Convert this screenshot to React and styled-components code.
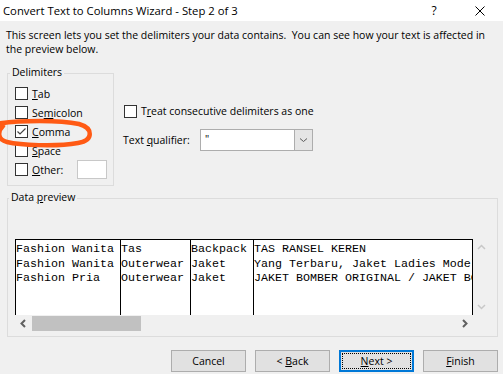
import React from "react";
import styled, { createGlobalStyle } from "styled-components";

const GlobalStyle = createGlobalStyle`
  html, body {
    margin: 0;
    padding: 0;
    background: #f0f0f0;
  }
  body {
    font-family: "Open Sans", "Liberation Sans", sans-serif;
  }
`;

const Window = styled.div`
  position: relative;
  width: 503px;
  height: 374px;
  overflow: hidden;
  background: #f0f0f0;
  color: #000;
  font-size: 10.5px;
`;

const TitleBar = styled.div`
  display: flex;
  align-items: center;
  height: 21px;
  background: #fff;
`;

const Title = styled.div`
  flex: 1;
  padding-left: 3px;
  font-size: 11.3px;
  line-height: 21px;
  white-space: nowrap;
`;

const CaptionButton = styled.div`
  width: 46px;
  height: 21px;
  display: flex;
  align-items: center;
  justify-content: center;
  font-size: 12px;
`;

const Content = styled.div`
  display: flex;
  flex-direction: column;
  padding: 0 5px 0 7px;
`;

const Intro = styled.p`
  margin: 7px 0 0 -1px;
  line-height: 14px;
  white-space: pre;
`;

const OptionsRow = styled.div`
  display: flex;
  margin-top: 17px;
`;

const GroupBox = styled.div`
  position: relative;
  box-sizing: border-box;
  width: ${(p) => p.$width}px;
  height: ${(p) => p.$height}px;
  border: 1px solid #dcdcdc;
`;

const Legend = styled.span`
  position: absolute;
  top: -9px;
  left: ${(p) => p.$left}px;
  padding: 0 2px;
  line-height: 14px;
  background: #f0f0f0;
`;

const U = styled.span`
  text-decoration: underline;
  text-underline-offset: 1px;
`;

const DelimList = styled.div`
  display: flex;
  flex-direction: column;
  padding: 10px 6px 6px 7px;
`;

const CheckRow = styled.label`
  display: flex;
  align-items: center;
  gap: 4px;
  height: ${(p) => p.$height || 19}px;
  white-space: nowrap;
`;

const Box = styled.span`
  box-sizing: border-box;
  display: flex;
  align-items: center;
  justify-content: center;
  width: 13px;
  height: 13px;
  flex: none;
  border: 1px solid #333;
  background: #fff;
`;

const SmallInput = styled.span`
  box-sizing: border-box;
  width: 30px;
  height: 19px;
  margin-left: auto;
  border: 1px solid #c8c8c8;
  background: #fff;
`;

const OptionsColumn = styled.div`
  display: flex;
  flex-direction: column;
  margin-left: 9px;
  padding-top: 29px;
`;

const TreatRow = styled(CheckRow)`
  padding-left: 1px;
`;

const QualifierRow = styled.div`
  display: flex;
  align-items: center;
  height: 22px;
  margin-top: 9px;
`;

const QualifierLabel = styled.span`
  width: 77px;
  white-space: nowrap;
`;

const Select = styled.div`
  box-sizing: border-box;
  display: flex;
  width: 113px;
  height: 22px;
  border: 1px solid #adadad;
  background: #fff;
`;

const SelectValue = styled.span`
  flex: 1;
  padding-left: 4px;
  line-height: 18px;
`;

const DropButton = styled.span`
  display: flex;
  align-items: center;
  justify-content: center;
  width: 17px;
  background: #e5e5e5;
  border-left: 1px solid #adadad;
`;

const DataGroup = styled(GroupBox)`
  margin-top: 12px;
  padding: 40px 0 0 7px;
`;

const Preview = styled.div`
  display: grid;
  grid-template-columns: 458px 17px;
  grid-template-rows: 76px 17px;
`;

const Table = styled.div`
  box-sizing: border-box;
  display: grid;
  grid-template-columns: 105px 70px 63px 1fr;
  border: 1px solid #000;
  border-bottom: none;
  background: #fff;
  font-family: "Liberation Mono", "Courier New", monospace;
  font-size: 11.67px;
`;

const Column = styled.div`
  box-sizing: border-box;
  padding-top: 2px;
  overflow: hidden;
  border-right: ${(p) => (p.$last ? "none" : "1px solid #000")};
`;

const Cell = styled.div`
  line-height: 14.5px;
  white-space: pre;
`;

const VScroll = styled.div`
  display: flex;
  flex-direction: column;
  justify-content: space-between;
`;

const ArrowBox = styled.span`
  display: flex;
  align-items: center;
  justify-content: center;
  width: 17px;
  height: 17px;
  flex: none;
`;

const HScroll = styled.div`
  display: flex;
  align-items: center;
`;

const Thumb = styled.span`
  width: 109px;
  height: 15px;
  background: #c1c1c1;
`;

const Spacer = styled.span`
  flex: 1;
`;

const ButtonRow = styled.div`
  display: flex;
  justify-content: flex-end;
  gap: 9px;
  margin-top: 13px;
`;

const Button = styled.button`
  position: relative;
  box-sizing: border-box;
  width: 75px;
  height: 22px;
  padding: 0;
  font-family: inherit;
  font-size: 10.5px;
  color: #000;
  background: #e1e1e1;
  border: ${(p) => (p.$focused ? "2px solid #0078d7" : "1px solid #adadad")};
  ${(p) =>
    p.$focused &&
    `
    &::after {
      content: "";
      position: absolute;
      inset: 1px;
      border: 1px dotted #000;
    }
  `}
`;

const Annotation = styled.svg`
  position: absolute;
  left: 0;
  top: 112px;
  pointer-events: none;
`;

function Check({ checked }) {
  return (
    <Box>
      {checked && (
        <svg width="11" height="11" viewBox="0 0 11 11">
          <path d="M1.5 5.5 L4 8 L9.5 2.5" fill="none" stroke="#444" strokeWidth="1.2" />
        </svg>
      )}
    </Box>
  );
}

const Chevron = ({ d, color, w = 9, h = 9, sw = 1.5 }) => (
  <svg width={w} height={h} viewBox={`0 0 ${w} ${h}`}>
    <path d={d} fill="none" stroke={color} strokeWidth={sw} />
  </svg>
);

const rows = [
  ["Fashion Wanita", "Tas", "Backpack", "TAS RANSEL KEREN"],
  ["Fashion Wanita", "Outerwear", "Jaket", "Yang Terbaru, Jaket Ladies Model Korea"],
  ["Fashion Pria", "Outerwear", "Jaket", "JAKET BOMBER ORIGINAL / JAKET BOMBER PRIA"],
];

export default function App() {
  return (
    <Window>
      <GlobalStyle />
      <TitleBar>
        <Title>Convert Text to Columns Wizard - Step 2 of 3</Title>
        <CaptionButton>?</CaptionButton>
        <CaptionButton>
          <svg width="10" height="10" viewBox="0 0 10 10">
            <path d="M0.5 0.5 L9.5 9.5 M9.5 0.5 L0.5 9.5" stroke="#000" strokeWidth="1" />
          </svg>
        </CaptionButton>
      </TitleBar>
      <Content>
        <Intro>
          {"This screen lets you set the delimiters your data contains.  You can see how your text is affected in"}
          <br />
          {"the preview below."}
        </Intro>
        <OptionsRow>
          <GroupBox $width={107} $height={113}>
            <Legend $left={2}>Delimiters</Legend>
            <DelimList>
              <CheckRow>
                <Check />
                <span><U>T</U>ab</span>
              </CheckRow>
              <CheckRow>
                <Check />
                <span>Se<U>m</U>icolon</span>
              </CheckRow>
              <CheckRow>
                <Check checked />
                <span><U>C</U>omma</span>
              </CheckRow>
              <CheckRow>
                <Check />
                <span><U>S</U>pace</span>
              </CheckRow>
              <CheckRow>
                <Check />
                <span><U>O</U>ther:</span>
                <SmallInput />
              </CheckRow>
            </DelimList>
          </GroupBox>
          <OptionsColumn>
            <TreatRow $height={18}>
              <Check />
              <span>T<U>r</U>eat consecutive delimiters as one</span>
            </TreatRow>
            <QualifierRow>
              <QualifierLabel>Text <U>q</U>ualifier:</QualifierLabel>
              <Select>
                <SelectValue>"</SelectValue>
                <DropButton>
                  <Chevron d="M1 1.5 L4.5 4.5 L8 1.5" color="#5a5a5a" h={6} sw={1} />
                </DropButton>
              </Select>
            </QualifierRow>
          </OptionsColumn>
        </OptionsRow>
        <DataGroup $width={491} $height={139}>
          <Legend $left={1}>Data <U>p</U>review</Legend>
          <Preview>
            <Table>
              {[0, 1, 2, 3].map((c) => (
                <Column key={c} $last={c === 3}>
                  {rows.map((r, i) => (
                    <Cell key={i}>{r[c]}</Cell>
                  ))}
                </Column>
              ))}
            </Table>
            <VScroll>
              <ArrowBox>
                <Chevron d="M1 6 L4.5 2.5 L8 6" color="#c8c8c8" />
              </ArrowBox>
              <ArrowBox>
                <Chevron d="M1 3 L4.5 6.5 L8 3" color="#c8c8c8" />
              </ArrowBox>
            </VScroll>
            <HScroll>
              <ArrowBox>
                <Chevron d="M6 1 L2.5 4.5 L6 8" color="#606060" sw={2} />
              </ArrowBox>
              <Thumb />
              <Spacer />
              <ArrowBox>
                <Chevron d="M3 1 L6.5 4.5 L3 8" color="#606060" sw={2} />
              </ArrowBox>
            </HScroll>
            <span />
          </Preview>
        </DataGroup>
        <ButtonRow>
          <Button>Cancel</Button>
          <Button>&lt; <U>B</U>ack</Button>
          <Button $focused><U>N</U>ext &gt;</Button>
          <Button><U>F</U>inish</Button>
        </ButtonRow>
      </Content>
      <Annotation width="96" height="36" viewBox="0 0 96 36">
        <path
          d="M-4 12 C 20 8, 60 8, 79 12 C 93 16, 94 28, 78 31 C 55 35, 20 33, 7 30 C -2 28, -3 20, 3 14"
          fill="none"
          stroke="#ff5a14"
          strokeWidth="4.5"
          strokeLinecap="round"
        />
      </Annotation>
    </Window>
  );
}
